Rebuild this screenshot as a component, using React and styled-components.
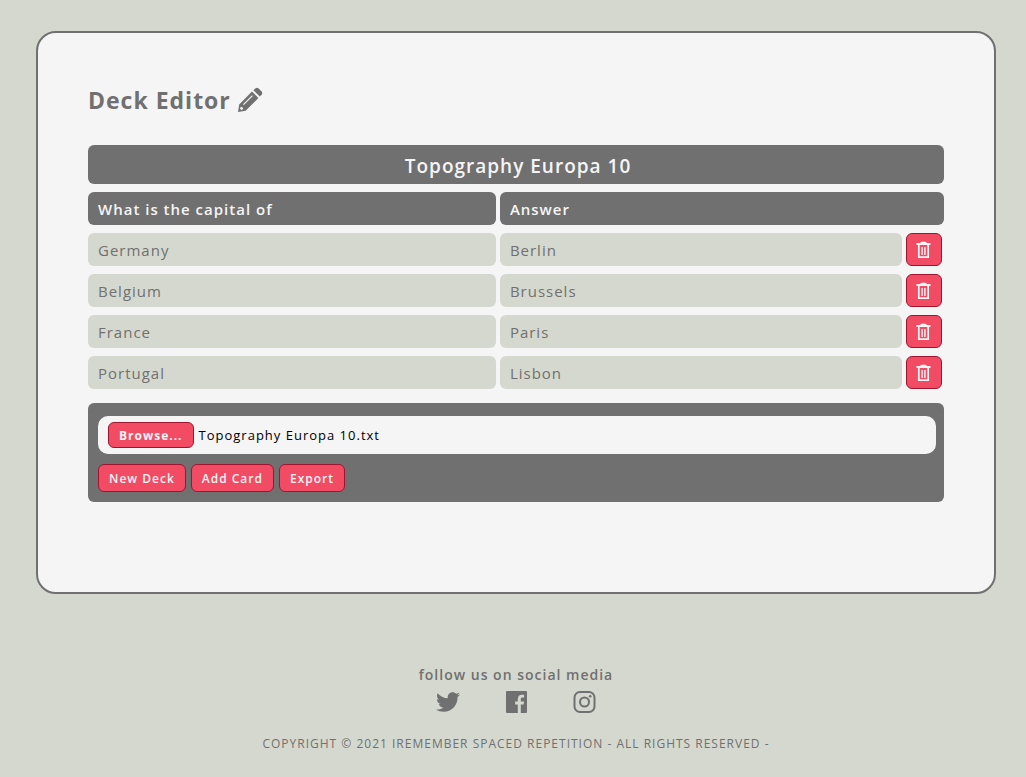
import React, { useRef, useState } from "react";
import styled, { createGlobalStyle } from "styled-components";
import { FaTwitter } from "react-icons/fa";

const GlobalStyle = createGlobalStyle`
  *, *::before, *::after { box-sizing: border-box; }
  body {
    margin: 0;
    background: #d5d8ce;
    color: #707070;
    font-family: "Segoe UI", "Open Sans", "Noto Sans", sans-serif;
    font-size: 16px;
    letter-spacing: 1px;
  }
`;

const Page = styled.div`
  padding: 31px 30px 24px 36px;
`;

const Card = styled.main`
  min-height: 563px;
  padding: 50px;
  border: 2px solid #707070;
  border-radius: 20px;
  background: #f5f5f5;
`;

const Heading = styled.h1`
  display: flex;
  align-items: center;
  gap: 6px;
  margin: 0 0 28px;
  font-size: 23px;
  line-height: 34px;
  font-weight: 700;
`;

const DeckTitle = styled.h2`
  margin: 0;
  padding: 4px 10px 1px 14px;
  border-radius: 6px;
  background: #707070;
  color: #f5f5f5;
  font-size: 19px;
  line-height: 34px;
  font-weight: 600;
  text-align: center;
`;

const TableWrap = styled.div`
  margin: 0 -4px;
`;

const CardTable = styled.table`
  width: 100%;
  table-layout: fixed;
  border-collapse: separate;
  border-spacing: 4px 8px;
`;

const QuestionCol = styled.col`
  width: 48.1%;
`;

const ActionCol = styled.col`
  width: 38px;
`;

const HeaderCell = styled.th`
  padding: 2px 10px 0;
  border-radius: 6px;
  background: #707070;
  color: #f5f5f5;
  font-size: 15px;
  line-height: 31px;
  font-weight: 600;
  text-align: left;
`;

const Cell = styled.td`
  padding: 2px 10px 0;
  border-radius: 6px;
  background: #d5d8ce;
  font-size: 15px;
  line-height: 31px;
`;

const ActionCell = styled.td`
  padding: 0;
  line-height: 0;
`;

const Button = styled.button`
  height: ${(p) => (p.$compact ? "26px" : "28px")};
  padding: 0 10px;
  border: 1px solid #a0142d;
  border-radius: 6px;
  background: #f24b64;
  color: #f5f5f5;
  font: inherit;
  font-size: 12px;
  font-weight: ${(p) => (p.$compact ? 700 : 600)};
  letter-spacing: inherit;
  white-space: nowrap;
  cursor: pointer;
`;

const DeleteButton = styled(Button)`
  display: flex;
  align-items: center;
  justify-content: center;
  width: 36px;
  height: 33px;
  padding: 0;
`;

const Controls = styled.section`
  margin-top: 6px;
  padding: 13px 8px 10px 10px;
  border-radius: 6px;
  background: #707070;
`;

const FilePicker = styled.div`
  display: flex;
  align-items: center;
  gap: 5px;
  height: 38px;
  padding: 0 10px;
  border-radius: 10px;
  background: #f5f5f5;
  color: #000;
  font-size: 13px;
`;

const ButtonRow = styled.div`
  display: flex;
  gap: 5px;
  margin-top: 10px;
`;

const Footer = styled.footer`
  display: flex;
  flex-direction: column;
  align-items: center;
  padding-top: 70px;
`;

const FollowText = styled.p`
  margin: 0;
  font-size: 14px;
  line-height: 22px;
  font-weight: 600;
`;

const SocialLinks = styled.nav`
  display: flex;
  gap: 44px;
  margin-top: 4px;
`;

const SocialLink = styled.a`
  display: flex;
  color: inherit;
`;

const Copyright = styled.p`
  margin: 21px 0 0;
  font-size: 12px;
  line-height: 18px;
  text-transform: uppercase;
`;

const PencilIcon = () => (
  <svg width="26" height="26" viewBox="0 0 26 26" fill="currentColor" aria-hidden="true">
    <path
      fillRule="evenodd"
      d="M1 25 L2.2 17.4 L15 4.6 L21.4 11 L8.6 23.8 Z M3.4 20.4 L3.1 21.8 L4.2 22.9 L5.6 22.6 L6.2 21.2 L4.8 19.8 Z M6 17.2 L6.9 18.1 L15.9 9.1 L15 8.2 Z"
    />
    <path d="M16.4 3.2 L18.6 1.2 Q20 .2 21.4 1.3 L24.7 4.6 Q25.8 6 24.8 7.4 L22.8 9.6 Z" />
  </svg>
);

const TrashIcon = () => (
  <svg width="16" height="17" viewBox="0 0 16 17" fill="none" stroke="currentColor" aria-hidden="true">
    <path d="M4.5 2 L5.5 1 H9.5 L10.5 2 Z" fill="currentColor" strokeWidth="0.6" />
    <path d="M0.5 3 H14.5" strokeWidth="2" />
    <path d="M2.8 3.5 V16.1 H12.2 V3.5" strokeWidth="1.7" />
    <path d="M6.1 6 V14 M8.9 6 V14" strokeWidth="1.4" />
  </svg>
);

const FacebookIcon = () => (
  <svg width="24" height="24" viewBox="0 0 24 24" fill="currentColor" aria-hidden="true">
    <path d="M22 1H3a1 1 0 0 0-1 1v20a1 1 0 0 0 1 1h10.8v-8.5h-2.7V11.5h2.7V9c0-2.8 1.7-4.3 4.1-4.3 1.2 0 1.9.1 2.2.2v2.6h-1.5c-1.4 0-1.8.7-1.8 1.7v2.3h3.2l-.4 3h-2.8V23H22a1 1 0 0 0 1-1V2a1 1 0 0 0-1-1z" />
  </svg>
);

const InstagramIcon = () => (
  <svg width="24" height="24" viewBox="0 0 24 24" fill="none" stroke="currentColor" strokeWidth="2" aria-hidden="true">
    <rect x="2.5" y="2" width="20" height="20" rx="5.5" />
    <circle cx="12.5" cy="12" r="4.5" />
    <circle cx="18.2" cy="6.3" r="1.3" fill="currentColor" stroke="none" />
  </svg>
);

const initialCards = [
  { question: "Germany", answer: "Berlin" },
  { question: "Belgium", answer: "Brussels" },
  { question: "France", answer: "Paris" },
  { question: "Portugal", answer: "Lisbon" },
];

export default function App() {
  const fileInput = useRef(null);
  const [fileName, setFileName] = useState("Topography Europa 10.txt");
  const [cards, setCards] = useState(initialCards);

  return (
    <>
      <GlobalStyle />
      <Page>
        <Card>
          <Heading>
            Deck Editor
            <PencilIcon />
          </Heading>
          <DeckTitle>Topography Europa 10</DeckTitle>
          <TableWrap>
            <CardTable>
              <colgroup>
                <QuestionCol />
                <col />
                <ActionCol />
              </colgroup>
              <thead>
                <tr>
                  <HeaderCell scope="col">What is the capital of</HeaderCell>
                  <HeaderCell scope="col" colSpan={2}>Answer</HeaderCell>
                </tr>
              </thead>
              <tbody>
                {cards.map((card) => (
                  <tr key={card.question}>
                    <Cell>{card.question}</Cell>
                    <Cell>{card.answer}</Cell>
                    <ActionCell>
                      <DeleteButton
                        type="button"
                        aria-label={`Delete ${card.question}`}
                        onClick={() => setCards(cards.filter((c) => c !== card))}
                      >
                        <TrashIcon />
                      </DeleteButton>
                    </ActionCell>
                  </tr>
                ))}
              </tbody>
            </CardTable>
          </TableWrap>
          <Controls>
            <FilePicker>
              <input
                ref={fileInput}
                type="file"
                hidden
                aria-label="Deck file"
                onChange={(e) => e.target.files[0] && setFileName(e.target.files[0].name)}
              />
              <Button type="button" $compact onClick={() => fileInput.current.click()}>
                Browse...
              </Button>
              <span>{fileName}</span>
            </FilePicker>
            <ButtonRow>
              <Button type="button">New Deck</Button>
              <Button type="button">Add Card</Button>
              <Button type="button">Export</Button>
            </ButtonRow>
          </Controls>
        </Card>
        <Footer>
          <FollowText>follow us on social media</FollowText>
          <SocialLinks aria-label="Social media">
            <SocialLink href="#twitter" aria-label="Twitter"><FaTwitter size={24} /></SocialLink>
            <SocialLink href="#facebook" aria-label="Facebook"><FacebookIcon /></SocialLink>
            <SocialLink href="#instagram" aria-label="Instagram"><InstagramIcon /></SocialLink>
          </SocialLinks>
          <Copyright>Copyright © 2021 iRemember Spaced Repetition - All rights reserved -</Copyright>
        </Footer>
      </Page>
    </>
  );
}
